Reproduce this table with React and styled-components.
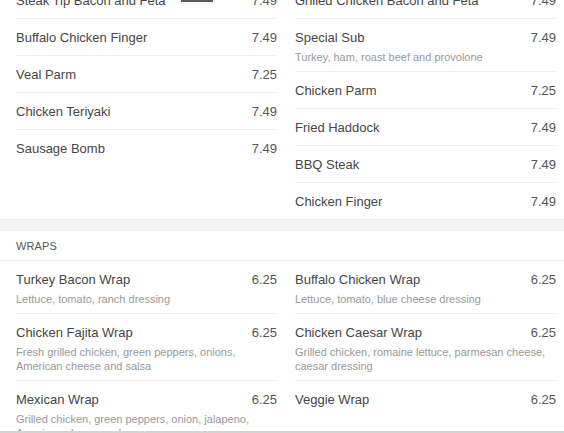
import React from 'react';
import styled, {createGlobalStyle} from 'styled-components';

const GlobalStyle = createGlobalStyle`
  html, body {
    margin: 0;
    padding: 0;
    background: #ffffff;
    overflow: hidden;
  }
  body {
    font-family: "Liberation Sans", Arial, sans-serif;
  }
`;

const Page = styled.div`
  position: relative;
  width: 564px;
  height: 433px;
  overflow: hidden;
  background: #ffffff;
`;

const Section = styled.section`
  background: #ffffff;
  margin-top: ${p => p.$offset || 0}px;
`;

const Gap = styled.div`
  height: 10px;
  background: #f4f4f4;
  border-top: 1px solid #ececec;
  border-bottom: 1px solid #f0f0f0;
`;

const SectionHeader = styled.h3`
  margin: 0;
  height: 29px;
  padding: 0 16px;
  display: flex;
  align-items: center;
  font-size: 11px;
  font-weight: normal;
  letter-spacing: 0.1px;
  text-transform: uppercase;
  color: #555555;
  border-bottom: 1px solid #eeeeee;
`;

const Columns = styled.div`
  display: grid;
  grid-template-columns: 1fr 1fr;
  column-gap: 18px;
  padding: 0 8px 0 16px;
`;

const Column = styled.div`
  display: flex;
  flex-direction: column;
`;

const Item = styled.div`
  padding: 10px 0 ${p => (p.$hasDesc ? 7 : 9)}px;
  border-bottom: 1px solid #eeeeee;

  &:last-child {
    border-bottom: none;
  }
`;

const ItemTop = styled.div`
  display: flex;
  justify-content: space-between;
  align-items: baseline;
  font-size: 13px;
  line-height: 17px;
`;

const Name = styled.span`
  color: #464646;
`;

const Price = styled.span`
  color: #555555;
`;

const Desc = styled.div`
  margin-top: 4px;
  font-size: 11px;
  line-height: 14px;
  color: #999999;
`;

const TopMark = styled.div`
  position: absolute;
  top: 0;
  left: 181px;
  width: 32px;
  height: 2px;
  background: #5a5a5a;
`;

const BottomBar = styled.div`
  position: absolute;
  left: 0;
  right: 0;
  bottom: 0;
  height: 2px;
  background: #d4d4d4;
`;

const subs = [
  [
    {name: 'Steak Tip Bacon and Feta', price: '7.49'},
    {name: 'Buffalo Chicken Finger', price: '7.49'},
    {name: 'Veal Parm', price: '7.25'},
    {name: 'Chicken Teriyaki', price: '7.49'},
    {name: 'Sausage Bomb', price: '7.49'},
  ],
  [
    {name: 'Grilled Chicken Bacon and Feta', price: '7.49'},
    {name: 'Special Sub', price: '7.49', desc: 'Turkey, ham, roast beef and provolone'},
    {name: 'Chicken Parm', price: '7.25'},
    {name: 'Fried Haddock', price: '7.49'},
    {name: 'BBQ Steak', price: '7.49'},
    {name: 'Chicken Finger', price: '7.49'},
  ],
];

const wraps = [
  [
    {name: 'Turkey Bacon Wrap', price: '6.25', desc: 'Lettuce, tomato, ranch dressing'},
    {name: 'Chicken Fajita Wrap', price: '6.25', desc: 'Fresh grilled chicken, green peppers, onions, American cheese and salsa'},
    {name: 'Mexican Wrap', price: '6.25', desc: 'Grilled chicken, green peppers, onion, jalapeno, American cheese, salsa'},
  ],
  [
    {name: 'Buffalo Chicken Wrap', price: '6.25', desc: 'Lettuce, tomato, blue cheese dressing'},
    {name: 'Chicken Caesar Wrap', price: '6.25', desc: 'Grilled chicken, romaine lettuce, parmesan cheese, caesar dressing'},
    {name: 'Veggie Wrap', price: '6.25'},
  ],
];

const MenuColumn = ({items}) => (
  <Column>
    {items.map(item => (
      <Item key={item.name} $hasDesc={!!item.desc}>
        <ItemTop>
          <Name>{item.name}</Name>
          <Price>{item.price}</Price>
        </ItemTop>
        {item.desc && <Desc>{item.desc}</Desc>}
      </Item>
    ))}
  </Column>
);

const App = () => {
  return (
    <Page>
      <GlobalStyle/>
      <Section $offset={-18}>
        <Columns>
          <MenuColumn items={subs[0]}/>
          <MenuColumn items={subs[1]}/>
        </Columns>
      </Section>
      <Gap/>
      <Section>
        <SectionHeader>Wraps</SectionHeader>
        <Columns>
          <MenuColumn items={wraps[0]}/>
          <MenuColumn items={wraps[1]}/>
        </Columns>
      </Section>
      <TopMark/>
      <BottomBar/>
    </Page>
  );
}

export default App;
